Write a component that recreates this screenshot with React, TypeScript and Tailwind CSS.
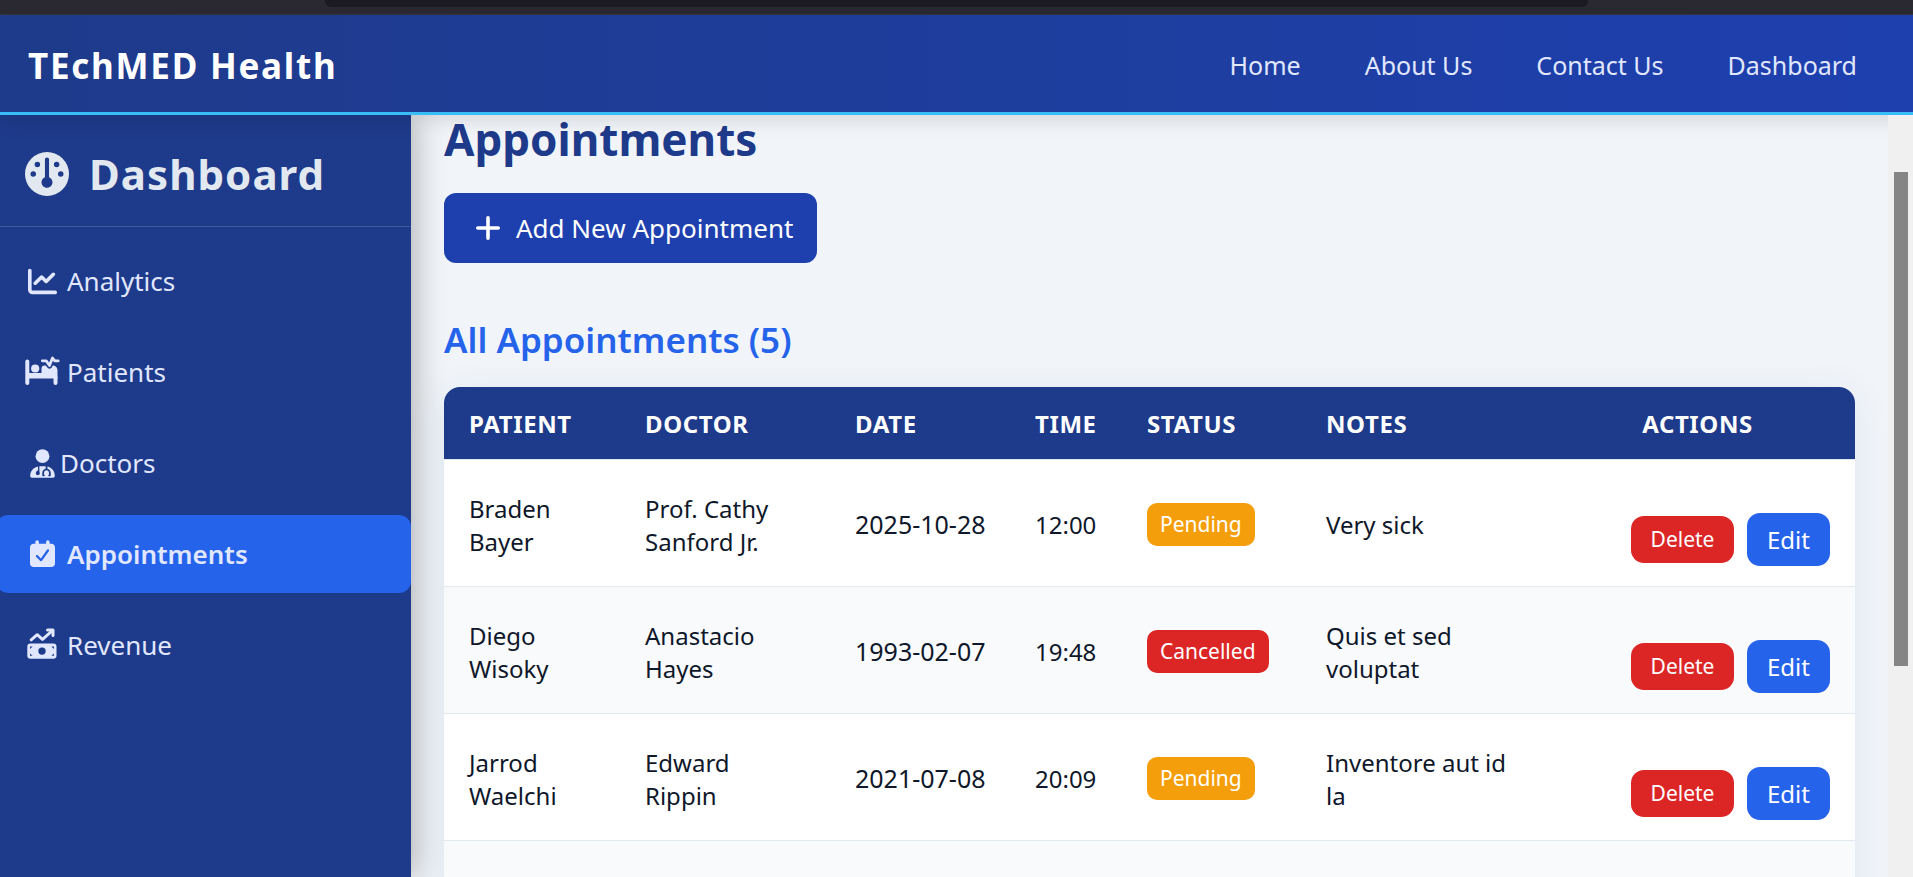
import type { ReactNode } from "react";
import { FaChartLine, FaGauge } from "react-icons/fa6";

function CalendarCheckIcon() {
  return (
    <svg viewBox="0 0 448 512" className="h-[29px] w-[25px]" fill="currentColor" aria-hidden="true">
      <path
        fillRule="evenodd"
        d="M128 0c17.700 0 32 14.300 32 32v32h128V32c0-17.700 14.300-32 32-32s32 14.300 32 32v32h32c35.300 0 64 28.700 64 64v288c0 35.300-28.700 64-64 64H64c-35.300 0-64-28.700-64-64V128c0-35.300 28.700-64 64-64h32V32c0-17.700 14.300-32 32-32zm206 168c-10-8-23-6-30 4L196 326l-57-56c-8-8-20-8-28 0s-8 21 0 29l73 74c5 5 10 6 16 6s11-4 15-9l123-174c7-10 5-22-4-28z"
      />
    </svg>
  );
}

function DoctorIcon() {
  return (
    <svg viewBox="0 0 448 512" className="h-[29px] w-[25px]" fill="currentColor" aria-hidden="true">
      <circle cx="224" cy="124" r="124" />
      <path
        fillRule="evenodd"
        d="M144 309v66c-23 9-40 31-40 57a36 36 0 1 0 72 0c0-26-13-45-8-57v-71h112v45c-36 8-60 38-60 75v44c0 9 6 16 14 16h18c8 0 14-6 14-14s-6-14-14-14v-32c0-26 18-46 44-46s44 20 44 46v32c-8 0-14 6-14 14s6 14 14 14h18c8 0 14-7 14-16v-44c0-37-24-67-60-75v-40c79 19 132 84 132 164v8c0 17-13 30-30 30H34c-17 0-30-13-30-30v-8c0-81 59-149 140-165z"
      />
    </svg>
  );
}

function BedPulseIcon() {
  return (
    <svg viewBox="9.500 6.500 36 33" className="h-[33px] w-9" fill="none" stroke="currentColor" strokeLinecap="round" strokeLinejoin="round" aria-hidden="true">
      <path d="M12.800 12v21.500M41 28v5.500" strokeWidth="4" />
      <path d="M12 23.500h15V19c0-1.800 1.200-3 3-3h8c3 0 5 2 5 5v8H12z" fill="currentColor" stroke="none" />
      <circle cx="20.700" cy="19" r="4.100" fill="currentColor" stroke="none" />
      <path d="M27.500 11.300h4l3.500 4.700 3-7.500 2.300 2.900h3.200" stroke="#1e3a8a" strokeWidth="6" />
      <path d="M27.800 11.300h3.900L35 16l3-7.500 2.300 2.900h3.400" strokeWidth="2.800" />
    </svg>
  );
}

function MoneyTrendIcon() {
  return (
    <svg viewBox="12 5.500 30 34" className="h-[34px] w-[30px]" fill="none" stroke="currentColor" strokeLinecap="round" strokeLinejoin="round" aria-hidden="true">
      <path d="M16.200 17.300l6-5.100 5.300 4.700L37.500 8" strokeWidth="3" />
      <path d="M32.500 7.500H38V13" strokeWidth="3" />
      <path
        fill="currentColor"
        stroke="none"
        fillRule="evenodd"
        d="M15.500 21h22.800a3.200 3.200 0 0 1 3.200 3.200v8.800a3.200 3.200 0 0 1-3.200 3.200H15.500a3.200 3.200 0 0 1-3.200-3.200v-8.800A3.200 3.200 0 0 1 15.500 21zM27 24.900a3.700 3.700 0 1 0 0 7.400 3.700 3.700 0 0 0 0-7.400zM15 24v2.400l2.600-2.400zM39 24v2.400L36.400 24zM15 33.300v-2.400l2.600 2.400zM39 33.300v-2.400l-2.600 2.400z"
      />
    </svg>
  );
}

function PlusIcon() {
  return (
    <svg viewBox="0 0 24 24" className="size-6" fill="none" stroke="currentColor" strokeWidth="3.600" strokeLinecap="round" aria-hidden="true">
      <path d="M12 1.800v20.400M1.800 12h20.400" />
    </svg>
  );
}

const topLinks = ["Home", "About Us", "Contact Us", "Dashboard"];

type SideItem = { label: string; icon: ReactNode; active?: boolean; tight?: boolean };

const sideItems: SideItem[] = [
  { label: "Analytics", icon: <FaChartLine className="size-[29px]" /> },
  { label: "Patients", icon: <BedPulseIcon /> },
  { label: "Doctors", icon: <DoctorIcon />, tight: true },
  { label: "Appointments", icon: <CalendarCheckIcon />, active: true },
  { label: "Revenue", icon: <MoneyTrendIcon /> },
];

type Row = {
  patient: string;
  doctor: string;
  date: string;
  time: string;
  status: "Pending" | "Cancelled";
  notes: string;
};

const rows: Row[] = [
  { patient: "Braden Bayer", doctor: "Prof. Cathy Sanford Jr.", date: "2025-10-28", time: "12:00", status: "Pending", notes: "Very sick" },
  { patient: "Diego Wisoky", doctor: "Anastacio Hayes", date: "1993-02-07", time: "19:48", status: "Cancelled", notes: "Quis et sed voluptat" },
  { patient: "Jarrod Waelchi", doctor: "Edward Rippin", date: "2021-07-08", time: "20:09", status: "Pending", notes: "Inventore aut id la" },
];

const headings = ["Patient", "Doctor", "Date", "Time", "Status", "Notes"];

function BrowserEdge() {
  return (
    <div className="flex h-[15px] shrink-0 justify-center border-b border-[#38363f] bg-[#2b2a33]">
      <div className="h-[7px] w-[66%] rounded-b-md bg-[#1c1b22]" />
    </div>
  );
}

function Header() {
  return (
    <header className="z-20 flex h-[100px] shrink-0 items-center justify-between border-b-3 border-[#38bdf8] bg-linear-to-r from-[#1e3a8a] to-[#1e40af] pr-14 pl-7 shadow-[0_3px_20px_rgba(0,0,0,0.15)]">
      <div className="pt-1.5 text-[35px] font-bold tracking-wider text-white">TEchMED Health</div>
      <nav className="flex gap-16 pt-1 text-[25px] text-[#e0e7ff]">
        {topLinks.map((label) => (
          <a key={label} href="#">
            {label}
          </a>
        ))}
      </nav>
    </header>
  );
}

function Sidebar() {
  return (
    <aside className="z-10 w-[411px] shrink-0 bg-[#1e3a8a] shadow-[3px_0_30px_rgba(0,0,0,0.3)]">
      <div className="flex h-28 items-center gap-5 border-b border-white/15 px-[25px] pt-1.5 text-[#e2e8f0]">
        <FaGauge className="size-11" />
        <span className="text-[42px] font-bold tracking-wide">Dashboard</span>
      </div>
      <nav className="mt-[15px] flex flex-col gap-[13px]">
        {sideItems.map((item) => (
          <a
            key={item.label}
            href="#"
            className={
              "-ml-1 flex h-[78px] items-center rounded-xl pl-7 text-[26px] text-[#e0e7ff] " +
              (item.active ? "bg-[#2563eb] font-semibold" : "") +
              (item.tight ? " gap-0" : " gap-[7px]")
            }
          >
            <span className="flex w-9 justify-center">{item.icon}</span>
            {item.label}
          </a>
        ))}
      </nav>
    </aside>
  );
}

function StatusBadge({ status }: { status: Row["status"] }) {
  return (
    <span
      className={
        "inline-block rounded-[10px] px-[13px] align-middle text-[21px] leading-[43px] text-white " +
        (status === "Pending" ? "bg-[#f59e0b]" : "bg-[#dc2626]")
      }
    >
      {status}
    </span>
  );
}

function AppointmentsTable() {
  return (
    <div className="mt-7 overflow-hidden rounded-t-2xl bg-white shadow-[0_7px_40px_rgba(30,58,138,0.08)]">
      <table className="w-full table-fixed border-collapse text-left text-[24px] leading-[33px] text-[#0f172a]">
        <colgroup>
          <col className="w-[176px]" />
          <col className="w-[210px]" />
          <col className="w-[180px]" />
          <col className="w-[112px]" />
          <col className="w-[179px]" />
          <col className="w-[239px]" />
          <col />
        </colgroup>
        <thead className="bg-[#1e3a8a] tracking-wide text-white uppercase">
          <tr className="h-[72px] border-b border-[#e2e8f0]">
            {headings.map((heading) => (
              <th key={heading} scope="col" className="pt-0.5 pl-[25px] font-bold">
                {heading}
              </th>
            ))}
            <th scope="col" className="pt-0.5 text-center font-bold">
              Actions
            </th>
          </tr>
        </thead>
        <tbody>
          {rows.map((row) => (
            <tr key={row.patient} className="h-[127px] border-b border-[#e2e8f0] odd:bg-white even:bg-[#f8fafc]">
              <td className="px-[25px] pt-1">{row.patient}</td>
              <td className="px-[25px] pt-1">{row.doctor}</td>
              <td className="pt-1 pl-[25px] text-[25px] whitespace-nowrap">{row.date}</td>
              <td className="pt-1 pl-[25px]">{row.time}</td>
              <td className="pt-1 pl-[25px]">
                <StatusBadge status={row.status} />
              </td>
              <td className="px-[25px] pt-1">{row.notes}</td>
              <td className="pr-[25px] pb-5 align-bottom">
                <div className="flex items-center justify-end gap-[13px]">
                  <button type="button" className="h-[47px] w-[103px] rounded-[13px] bg-[#dc2626] text-[21px] text-white">
                    Delete
                  </button>
                  <button type="button" className="h-[53px] w-[83px] rounded-[13px] bg-[#2563eb] text-[24px] text-white">
                    Edit
                  </button>
                </div>
              </td>
            </tr>
          ))}
          <tr className="h-[127px] bg-[#f8fafc]">
            <td colSpan={7} />
          </tr>
        </tbody>
      </table>
    </div>
  );
}

function ScrollTrack() {
  return (
    <div className="z-30 flex w-[25px] shrink-0 flex-col items-center bg-[#f0f0f0] pt-[57px]">
      <div className="h-[70%] w-[14px] bg-[#858585]" />
    </div>
  );
}

export default function App() {
  return (
    <div className="flex h-screen flex-col overflow-hidden bg-[#f1f5f9] font-['Noto_Sans','Open_Sans',sans-serif]">
      <BrowserEdge />
      <Header />
      <div className="flex min-h-0 flex-1">
        <Sidebar />
        <main className="min-w-0 flex-1 px-[33px]">
          <h1 className="text-[44px] leading-[48px] font-bold text-[#1e3a8a]">Appointments</h1>
          <button
            type="button"
            className="mt-[30px] flex h-[70px] items-center gap-4 rounded-xl bg-[#1e40af] pr-6 pl-8 text-[26px] text-white"
          >
            <PlusIcon />
            Add New Appointment
          </button>
          <h2 className="mt-[58px] text-[35px] leading-[38px] font-semibold text-[#2563eb]">All Appointments (5)</h2>
          <AppointmentsTable />
        </main>
        <ScrollTrack />
      </div>
    </div>
  );
}
